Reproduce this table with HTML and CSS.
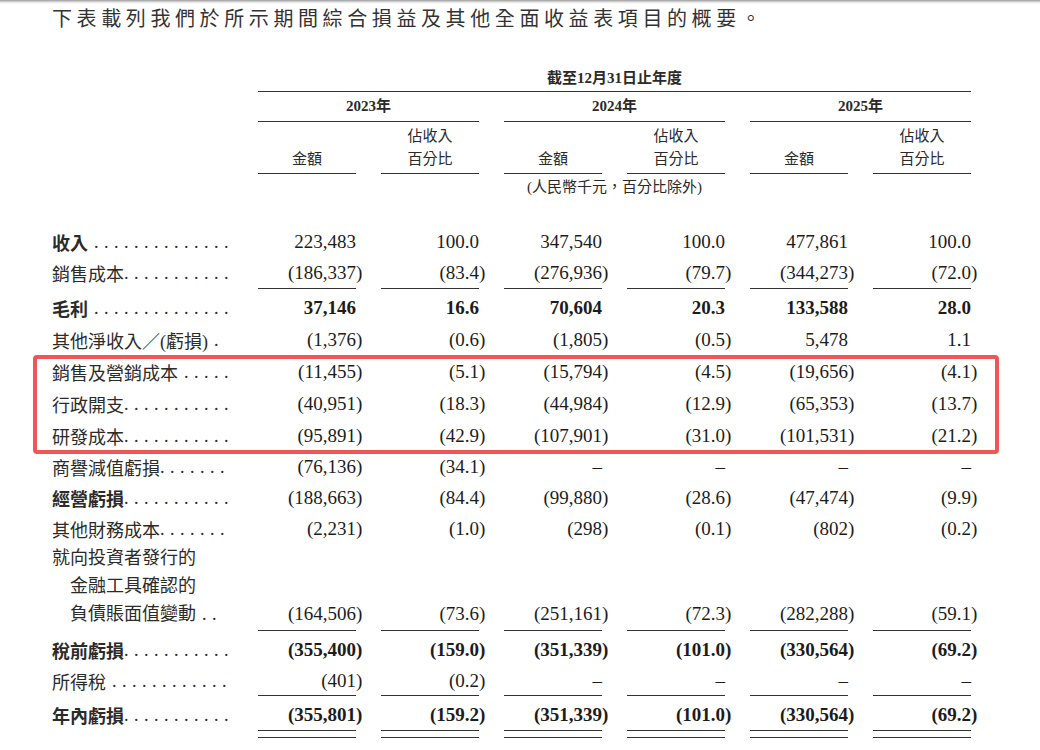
FILE: index.html
```html
<!DOCTYPE html>
<html lang="zh-Hant">
<head>
<meta charset="utf-8">
<title>綜合損益表概要</title>
<link rel="stylesheet" href="styles.css">
</head>
<body>
<div class="topbar"></div>
<div class="page">
  <p class="intro">下表載列我們於所示期間綜合損益及其他全面收益表項目的概要。</p>

  <div class="table">
    <div class="head">
      <div></div>
      <div class="period">截至12月31日止年度</div>

      <div></div>
      <div class="year">2023年</div>
      <div class="year">2024年</div>
      <div class="year">2025年</div>

      <div></div>
      <div class="sub">金額</div>
      <div class="sub">佔收入<br>百分比</div>
      <div class="sub">金額</div>
      <div class="sub">佔收入<br>百分比</div>
      <div class="sub">金額</div>
      <div class="sub">佔收入<br>百分比</div>

      <div></div><div></div><div></div>
      <div class="unit">(人民幣千元，百分比除外)</div>
      <div></div><div></div>
    </div>

    <div class="body">
      <div class="row short bl">
        <div class="label">收入<span class="dots sp">..............</span></div>
        <div class="n">223,483</div><div class="n">100.0</div>
        <div class="n">347,540</div><div class="n">100.0</div>
        <div class="n">477,861</div><div class="n">100.0</div>
      </div>
      <div class="row rule">
        <div class="label">銷售成本<span class="dots">...........</span></div>
        <div class="n"><span class="neg">(186,337)</span></div><div class="n"><span class="neg">(83.4)</span></div>
        <div class="n"><span class="neg">(276,936)</span></div><div class="n"><span class="neg">(79.7)</span></div>
        <div class="n"><span class="neg">(344,273)</span></div><div class="n"><span class="neg">(72.0)</span></div>
      </div>
      <div class="row tall bl bn">
        <div class="label">毛利<span class="dots sp">..............</span></div>
        <div class="n">37,146</div><div class="n">16.6</div>
        <div class="n">70,604</div><div class="n">20.3</div>
        <div class="n">133,588</div><div class="n">28.0</div>
      </div>
      <div class="row">
        <div class="label">其他淨收入／(虧損)<span class="dots sp">.</span></div>
        <div class="n"><span class="neg">(1,376)</span></div><div class="n"><span class="neg">(0.6)</span></div>
        <div class="n"><span class="neg">(1,805)</span></div><div class="n"><span class="neg">(0.5)</span></div>
        <div class="n">5,478</div><div class="n">1.1</div>
      </div>

      <div class="hl">
        <div class="row">
          <div class="label">銷售及營銷成本<span class="dots sp">.....</span></div>
          <div class="n"><span class="neg">(11,455)</span></div><div class="n"><span class="neg">(5.1)</span></div>
          <div class="n"><span class="neg">(15,794)</span></div><div class="n"><span class="neg">(4.5)</span></div>
          <div class="n"><span class="neg">(19,656)</span></div><div class="n"><span class="neg">(4.1)</span></div>
        </div>
        <div class="row">
          <div class="label">行政開支<span class="dots">...........</span></div>
          <div class="n"><span class="neg">(40,951)</span></div><div class="n"><span class="neg">(18.3)</span></div>
          <div class="n"><span class="neg">(44,984)</span></div><div class="n"><span class="neg">(12.9)</span></div>
          <div class="n"><span class="neg">(65,353)</span></div><div class="n"><span class="neg">(13.7)</span></div>
        </div>
        <div class="row">
          <div class="label">研發成本<span class="dots">...........</span></div>
          <div class="n"><span class="neg">(95,891)</span></div><div class="n"><span class="neg">(42.9)</span></div>
          <div class="n"><span class="neg">(107,901)</span></div><div class="n"><span class="neg">(31.0)</span></div>
          <div class="n"><span class="neg">(101,531)</span></div><div class="n"><span class="neg">(21.2)</span></div>
        </div>
      </div>

      <div class="row short">
        <div class="label">商譽減值虧損<span class="dots">.......</span></div>
        <div class="n"><span class="neg">(76,136)</span></div><div class="n"><span class="neg">(34.1)</span></div>
        <div class="n">–</div><div class="n">–</div>
        <div class="n">–</div><div class="n">–</div>
      </div>
      <div class="row bl">
        <div class="label">經營虧損<span class="dots">...........</span></div>
        <div class="n"><span class="neg">(188,663)</span></div><div class="n"><span class="neg">(84.4)</span></div>
        <div class="n"><span class="neg">(99,880)</span></div><div class="n"><span class="neg">(28.6)</span></div>
        <div class="n"><span class="neg">(47,474)</span></div><div class="n"><span class="neg">(9.9)</span></div>
      </div>
      <div class="row short">
        <div class="label">其他財務成本<span class="dots">.......</span></div>
        <div class="n"><span class="neg">(2,231)</span></div><div class="n"><span class="neg">(1.0)</span></div>
        <div class="n"><span class="neg">(298)</span></div><div class="n"><span class="neg">(0.1)</span></div>
        <div class="n"><span class="neg">(802)</span></div><div class="n"><span class="neg">(0.2)</span></div>
      </div>
      <div class="row multi rule">
        <div class="label">
          <span class="line">就向投資者發行的</span>
          <span class="line indent">金融工具確認的</span>
          <span class="line indent">負債賬面值變動<span class="dots sp">..</span></span>
        </div>
        <div class="n"><span class="neg">(164,506)</span></div><div class="n"><span class="neg">(73.6)</span></div>
        <div class="n"><span class="neg">(251,161)</span></div><div class="n"><span class="neg">(72.3)</span></div>
        <div class="n"><span class="neg">(282,288)</span></div><div class="n"><span class="neg">(59.1)</span></div>
      </div>
      <div class="row tall bl bn">
        <div class="label">稅前虧損<span class="dots">...........</span></div>
        <div class="n"><span class="neg">(355,400)</span></div><div class="n"><span class="neg">(159.0)</span></div>
        <div class="n"><span class="neg">(351,339)</span></div><div class="n"><span class="neg">(101.0)</span></div>
        <div class="n"><span class="neg">(330,564)</span></div><div class="n"><span class="neg">(69.2)</span></div>
      </div>
      <div class="row short rule">
        <div class="label">所得稅<span class="dots sp">............</span></div>
        <div class="n"><span class="neg">(401)</span></div><div class="n"><span class="neg">(0.2)</span></div>
        <div class="n">–</div><div class="n">–</div>
        <div class="n">–</div><div class="n">–</div>
      </div>
      <div class="row tall bl bn rule">
        <div class="label">年內虧損<span class="dots">...........</span></div>
        <div class="n"><span class="neg">(355,801)</span></div><div class="n"><span class="neg">(159.2)</span></div>
        <div class="n"><span class="neg">(351,339)</span></div><div class="n"><span class="neg">(101.0)</span></div>
        <div class="n"><span class="neg">(330,564)</span></div><div class="n"><span class="neg">(69.2)</span></div>
      </div>
      <div class="row dbl rule">
        <div></div>
        <div class="n"></div><div class="n"></div>
        <div class="n"></div><div class="n"></div>
        <div class="n"></div><div class="n"></div>
      </div>
    </div>
  </div>
</div>
</body>
</html>
```

FILE: styles.css
```css
* {
  box-sizing: border-box;
}

html, body {
  margin: 0;
  padding: 0;
  background: #ffffff;
}

body {
  width: 1040px;
  height: 750px;
  overflow: hidden;
  font-family: "Liberation Serif", "Noto Sans CJK TC", serif;
  color: #222;
}

.topbar {
  height: 4px;
  background: linear-gradient(#9c9c9c, #e8e8e8 60%, #ffffff);
}

.page {
  padding-left: 52px;
}

.intro {
  margin: 0;
  font-family: "Noto Sans CJK TC", sans-serif;
  font-size: 20px;
  line-height: 28px;
  letter-spacing: 4.6px;
  color: #333;
}

.table {
  width: 919px;
  margin-top: 33px;
}

.head,
.row {
  display: grid;
  grid-template-columns: 181px repeat(6, 98px);
  column-gap: 25px;
}

.head {
  font-size: 15px;
  color: #2a2a2a;
}

.period {
  grid-column: 2 / -1;
  text-align: center;
  font-weight: bold;
  line-height: 26px;
  border-bottom: 1px solid #333;
}

.year {
  grid-column: span 2;
  text-align: center;
  font-weight: bold;
  line-height: 29px;
  border-bottom: 1px solid #333;
}

.sub {
  display: flex;
  align-items: flex-end;
  justify-content: center;
  text-align: center;
  line-height: 23px;
  padding: 3px 0 2px;
  border-bottom: 1px solid #333;
}

.unit {
  grid-column: span 2;
  text-align: center;
  line-height: 23px;
  padding-top: 2px;
  white-space: nowrap;
}

.body {
  margin-top: 28px;
}

.row {
  height: 32px;
}

.row.short {
  height: 30px;
}

.row.tall {
  height: 35px;
  padding-top: 3px;
}

.row > div {
  display: flex;
  align-items: center;
}

.label {
  font-size: 18px;
  color: #2b2b2b;
  white-space: nowrap;
}

.dots {
  letter-spacing: 5.5px;
  font-weight: normal;
}

.dots.sp {
  margin-left: 6px;
}

.n {
  justify-content: flex-end;
  font-size: 19px;
  color: #1c1c1c;
  white-space: nowrap;
}

.neg {
  margin-right: -0.333em;
}

.bl .label {
  font-weight: bold;
}

.bn .n {
  font-weight: bold;
}

.rule .n {
  border-bottom: 1px solid #333;
}

.row.multi {
  height: 87px;
}

.row.multi > .label {
  display: block;
  line-height: 28px;
}

.line {
  display: block;
}

.line.indent {
  padding-left: 18px;
}

.row.multi > .n {
  align-items: flex-end;
  line-height: 28px;
  padding-bottom: 2px;
}

.row.dbl {
  height: 7px;
}

.hl {
  position: relative;
}

.hl::after {
  content: "";
  position: absolute;
  top: -1px;
  bottom: -2px;
  left: -19px;
  right: -28px;
  border: 4px solid #ef5656;
  border-radius: 4px;
  pointer-events: none;
}
```
